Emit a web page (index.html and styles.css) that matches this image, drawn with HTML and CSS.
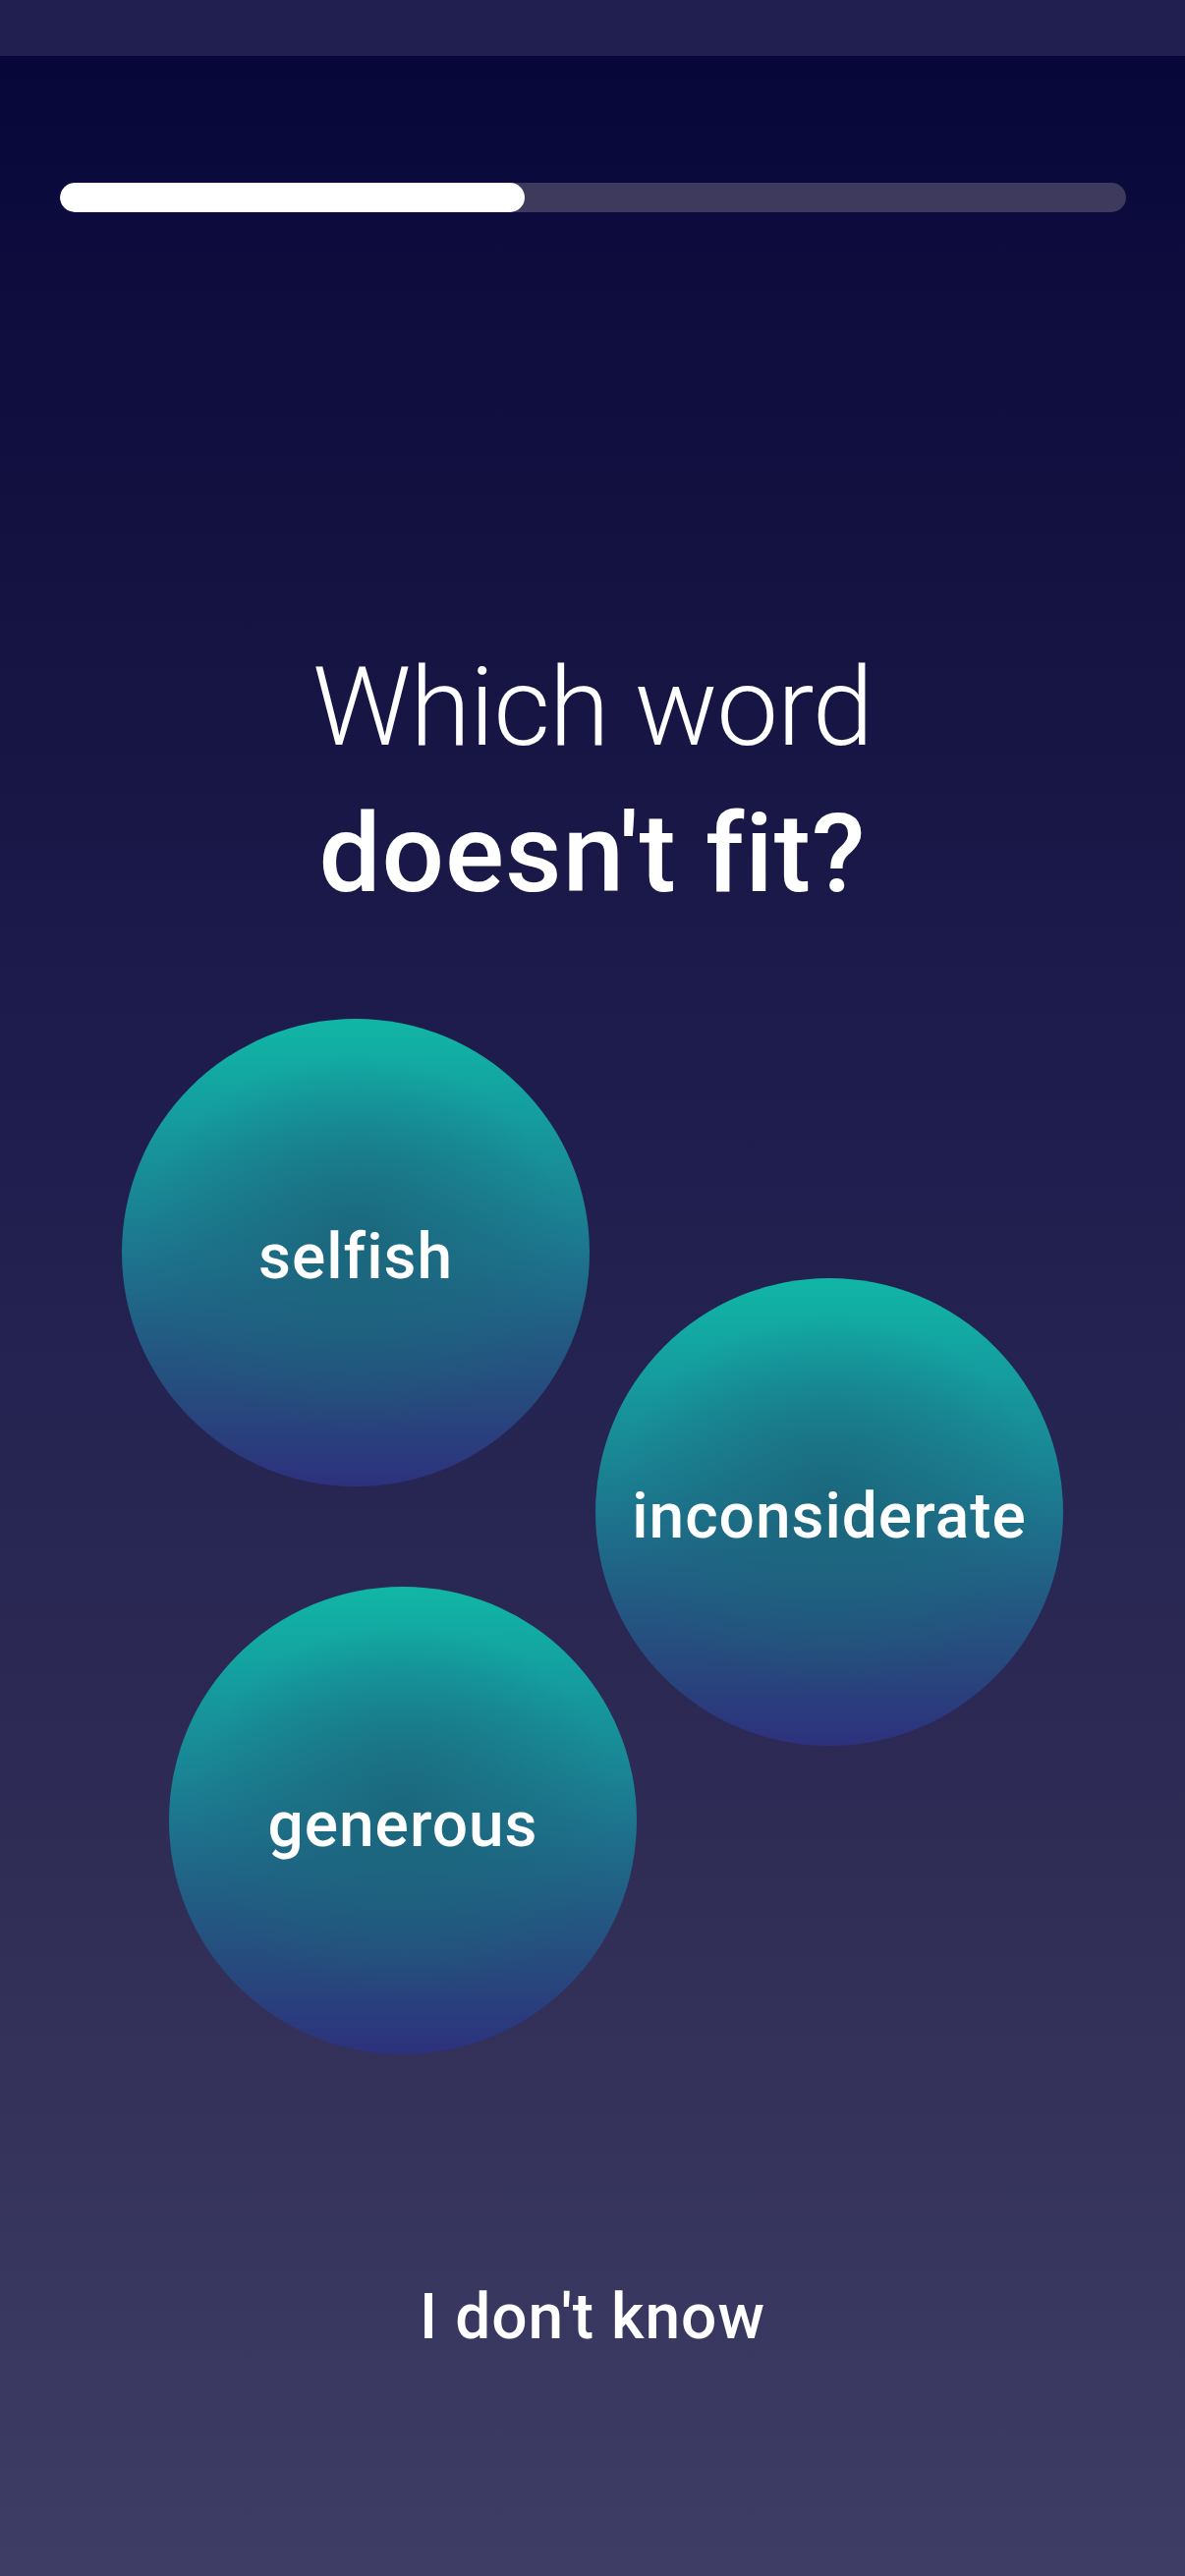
FILE: index.html
```html
<!DOCTYPE html>
<html lang="en">
<head>
<meta charset="utf-8">
<title>Which word doesn't fit?</title>
<link rel="stylesheet" href="styles.css">
</head>
<body>
<div class="screen">
  <div class="status-bar"></div>
  <main class="quiz">
    <div class="progress">
      <div class="progress-fill" style="width: 43.6%"></div>
    </div>
    <h1 class="question">
      <span class="question-light">Which word</span>
      <span class="question-bold">doesn't fit?</span>
    </h1>
    <div class="bubble-field">
      <button class="bubble bubble-one">selfish</button>
      <button class="bubble bubble-two">inconsiderate</button>
      <button class="bubble bubble-three">generous</button>
    </div>
    <button class="skip">I don't know</button>
  </main>
</div>
</body>
</html>
```

FILE: styles.css
```css
* { box-sizing: border-box; }

html, body {
  margin: 0;
  padding: 0;
}

body {
  width: 1206px;
  height: 2622px;
  overflow: hidden;
  font-family: Roboto, "Liberation Sans", sans-serif;
  color: #ffffff;
  background: #07063a;
}

.screen {
  width: 1206px;
  height: 2622px;
  display: flex;
  flex-direction: column;
  background: linear-gradient(180deg, #07063a 0%, #131140 20%, #201e4e 45%, #2f2d56 72%, #3e3d65 100%);
}

.status-bar {
  height: 57px;
  flex: 0 0 57px;
  background: #201f4f;
}

.quiz {
  flex: 1;
  display: flex;
  flex-direction: column;
  align-items: center;
  padding-top: 129px;
}

.progress {
  width: 1085px;
  height: 30px;
  border-radius: 15px;
  background: #3d3a5d;
  overflow: hidden;
  align-self: flex-start;
  margin-left: 61px;
}

.progress-fill {
  height: 100%;
  background: #ffffff;
  border-radius: 15px;
}

.question {
  margin: 429px 0 0;
  display: flex;
  flex-direction: column;
  align-items: center;
  font-size: 112px;
  line-height: 149px;
  font-weight: 400;
  text-align: center;
}

.question-light {
  font-weight: 300;
  letter-spacing: -1px;
}

.question-bold {
  font-weight: 500;
  font-size: 112px;
  letter-spacing: 1px;
}

.bubble-field {
  position: relative;
  width: 1206px;
  height: 1376px;
}

.bubble {
  position: absolute;
  width: 476px;
  height: 476px;
  border-radius: 50%;
  border: none;
  padding: 10px 0 0;
  margin: 0;
  display: flex;
  align-items: center;
  justify-content: center;
  font-family: Roboto, "Liberation Sans", sans-serif;
  font-size: 64px;
  line-height: 64px;
  font-weight: 500;
  letter-spacing: 1px;
  color: #ffffff;
  background:
    radial-gradient(ellipse 46% 40% at 50% 48%, rgba(27, 100, 122, 0.85) 0%, rgba(27, 100, 122, 0) 100%),
    linear-gradient(180deg, #11b6a6 0%, #14a0a0 18%, #1a8494 40%, #215f84 65%, #27497d 82%, #2d317d 100%);
}

.bubble-one {
  left: 124px;
  top: 94px;
}

.bubble-two {
  left: 606px;
  top: 358px;
}

.bubble-three {
  left: 172px;
  top: 672px;
}

.skip {
  border: none;
  background: none;
  padding: 0;
  margin: 0;
  font-family: Roboto, "Liberation Sans", sans-serif;
  font-size: 64px;
  line-height: 80px;
  font-weight: 500;
  letter-spacing: 1px;
  color: #ffffff;
}
```
